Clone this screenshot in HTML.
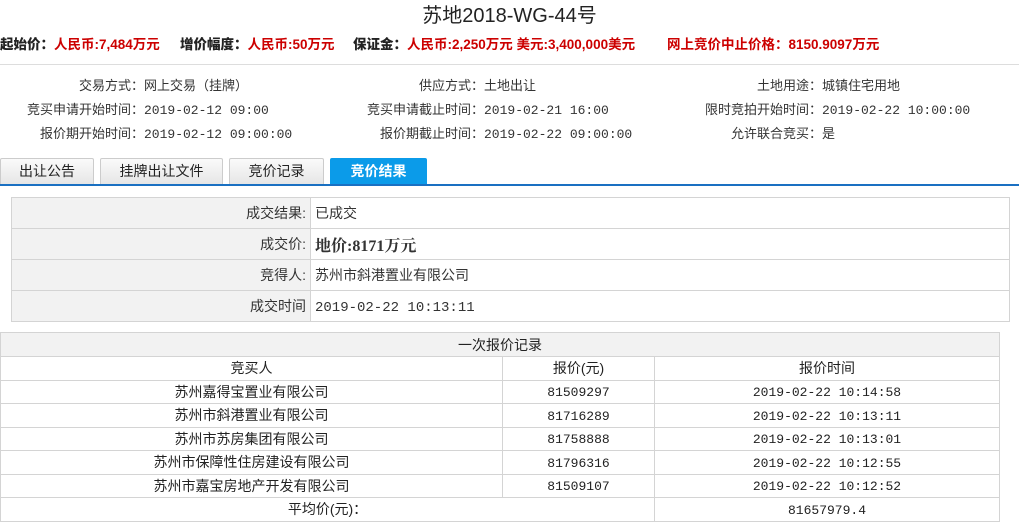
<!DOCTYPE html>
<html><head><meta charset="utf-8"><style>
*{margin:0;padding:0;box-sizing:border-box}
body{width:1019px;height:529px;overflow:hidden;background:#fff;font-family:"Liberation Sans","Noto Sans CJK SC",sans-serif;color:#333;font-size:13px;position:relative}
.a{position:absolute;white-space:nowrap;line-height:18px}
.title{left:0;width:1019px;text-align:center;top:4px;font-size:20px;color:#222;line-height:24px}
.red{top:36px;font-size:13.5px;font-weight:bold;color:#c00}
.red b{color:#222}
.sep{left:0;top:64px;width:1019px;height:1px;background:#ddd}
.lab{text-align:right}
.tab{top:158px;height:26px;border:1px solid #ccc;border-bottom:none;background:linear-gradient(#fafafa,#e6e6e6);text-align:center;line-height:24px;font-size:14px;color:#222;border-radius:2px 2px 0 0}
.tab.on{background:#0b9be9;border-color:#0b9be9;color:#fff;font-weight:bold}
table{position:absolute;border-collapse:collapse;table-layout:fixed}
td{border:1px solid #d4d4d4;padding:0 4px;white-space:nowrap;vertical-align:middle}
.t1 td{height:31px;font-size:14px}
.t1 td.l{background:#f2f2f2;text-align:right}
.t2 td{height:23.5px;text-align:center;font-size:13px;color:#222}
.mono{font-family:"Liberation Mono","Noto Sans CJK SC",monospace;font-size:13px;line-height:18px}
td.mono{padding-top:3px}
</style></head><body>
<div class="a title">苏地2018-WG-44号</div>
<div class="a red" style="left:0"><b>起始价：</b>人民币:7,484万元</div>
<div class="a red" style="left:180px"><b>增价幅度：</b>人民币:50万元</div>
<div class="a red" style="left:353px"><b>保证金：</b>人民币:2,250万元 美元:3,400,000美元</div>
<div class="a red" style="left:667px">网上竞价中止价格：8150.9097万元</div>
<div class="a sep"></div>

<div class="a lab" style="left:0;width:144px;top:77px">交易方式：</div><div class="a" style="left:144px;top:77px">网上交易（挂牌）</div>
<div class="a lab" style="left:0;width:144px;top:101px">竞买申请开始时间：</div><div class="a mono" style="left:144px;top:102px">2019-02-12 09:00</div>
<div class="a lab" style="left:0;width:144px;top:125px">报价期开始时间：</div><div class="a mono" style="left:144px;top:126px">2019-02-12 09:00:00</div>

<div class="a lab" style="left:300px;width:184px;top:77px">供应方式：</div><div class="a" style="left:484px;top:77px">土地出让</div>
<div class="a lab" style="left:300px;width:184px;top:101px">竞买申请截止时间：</div><div class="a mono" style="left:484px;top:102px">2019-02-21 16:00</div>
<div class="a lab" style="left:300px;width:184px;top:125px">报价期截止时间：</div><div class="a mono" style="left:484px;top:126px">2019-02-22 09:00:00</div>

<div class="a lab" style="left:640px;width:182px;top:77px">土地用途：</div><div class="a" style="left:822px;top:77px">城镇住宅用地</div>
<div class="a lab" style="left:640px;width:182px;top:101px">限时竞拍开始时间：</div><div class="a mono" style="left:822px;top:102px">2019-02-22 10:00:00</div>
<div class="a lab" style="left:640px;width:182px;top:125px">允许联合竞买：</div><div class="a" style="left:822px;top:125px">是</div>

<div class="a tab" style="left:0;width:94px">出让公告</div>
<div class="a tab" style="left:100px;width:123px">挂牌出让文件</div>
<div class="a tab" style="left:229px;width:95px">竞价记录</div>
<div class="a tab on" style="left:330px;width:97px">竞价结果</div>
<div class="a" style="left:0;top:184px;width:1019px;height:2px;background:#1a70c2"></div>

<table class="t1" style="left:11px;top:197px;width:999px">
<col style="width:299px"><col>
<tr><td class="l">成交结果:</td><td>已成交</td></tr>
<tr><td class="l">成交价:</td><td style="font-family:'Liberation Serif','Noto Serif CJK SC',serif;font-weight:bold;font-size:16px">地价:8171万元</td></tr>
<tr><td class="l">竞得人:</td><td>苏州市斜港置业有限公司</td></tr>
<tr><td class="l">成交时间</td><td class="mono">2019-02-22 10:13:11</td></tr>
</table>

<table class="t2" style="left:0;top:332px;width:1000px">
<col style="width:502px"><col style="width:152px"><col>
<tr><td colspan="3" style="background:#f2f2f2;height:24px;font-size:14px">一次报价记录</td></tr>
<tr><td style="font-size:14px">竞买人</td><td style="font-size:14px">报价(元)</td><td style="font-size:14px">报价时间</td></tr>
<tr><td style="font-size:14px">苏州嘉得宝置业有限公司</td><td class="mono">81509297</td><td class="mono">2019-02-22 10:14:58</td></tr>
<tr><td style="font-size:14px">苏州市斜港置业有限公司</td><td class="mono">81716289</td><td class="mono">2019-02-22 10:13:11</td></tr>
<tr><td style="font-size:14px">苏州市苏房集团有限公司</td><td class="mono">81758888</td><td class="mono">2019-02-22 10:13:01</td></tr>
<tr><td style="font-size:14px">苏州市保障性住房建设有限公司</td><td class="mono">81796316</td><td class="mono">2019-02-22 10:12:55</td></tr>
<tr><td style="font-size:14px">苏州市嘉宝房地产开发有限公司</td><td class="mono">81509107</td><td class="mono">2019-02-22 10:12:52</td></tr>
<tr><td colspan="2" style="font-size:14px">平均价(元)：</td><td class="mono">81657979.4</td></tr>
</table>
</body></html>
